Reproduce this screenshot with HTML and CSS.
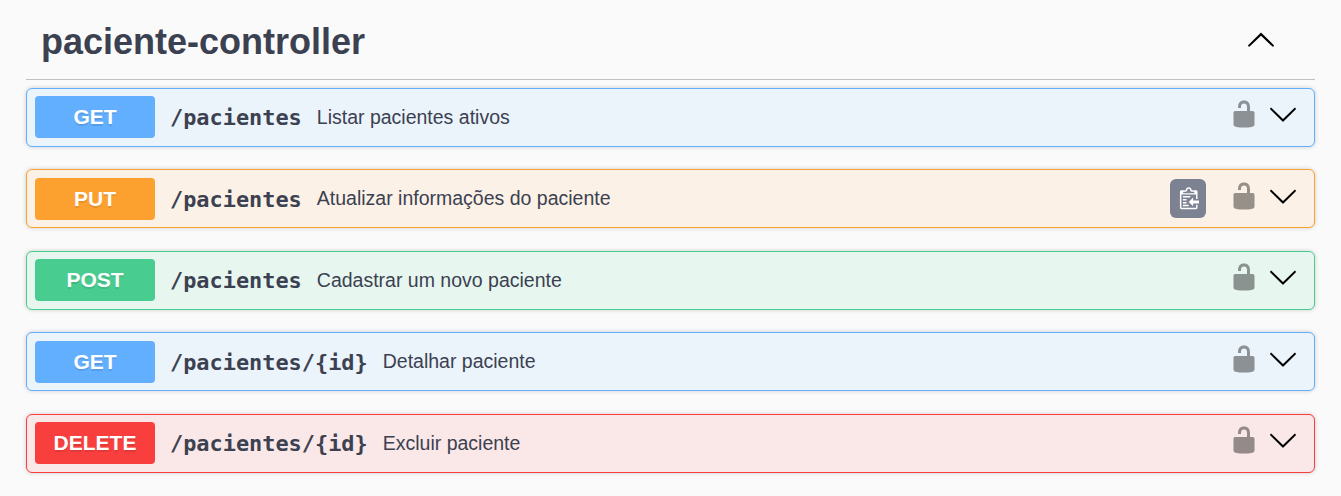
FILE: index.html
```
<!DOCTYPE html>
<html lang="pt-BR">
<head>
<meta charset="utf-8">
<title>paciente-controller</title>
<link rel="stylesheet" href="styles.css">
</head>
<body>
<svg class="sprite" aria-hidden="true">
  <symbol id="unlocked" viewBox="0 0 20 20"><path d="M15.8 8H14V5.6C14 2.703 12.665 1 10 1 7.334 1 6 2.703 6 5.6V6h2v-.801C8 3.754 8.797 3 10 3c1.203 0 2 .754 2 2.199V8H4c-.553 0-1 .646-1 1.199V17c0 .549.428 1.139.951 1.307l1.197.387C5.672 18.861 6.55 19 7.1 19h5.8c.549 0 1.428-.139 1.951-.307l1.196-.387c.524-.167.953-.757.953-1.306V9.199C17 8.646 16.352 8 15.8 8z"/></symbol>
  <symbol id="arrow-down" viewBox="0 0 20 20"><path d="M17.418 6.109c.272-.268.709-.268.979 0s.271.701 0 .969l-7.908 7.83c-.27.268-.707.268-.979 0l-7.908-7.83c-.27-.268-.27-.701 0-.969.271-.268.709-.268.979 0L10 13.25l7.418-7.141z"/></symbol>
  <symbol id="arrow-up" viewBox="0 0 20 20"><path d="M17.418 14.908c.272.27.709.27.979 0s.271-.701 0-.969l-7.908-7.83c-.27-.268-.707-.268-.979 0l-7.908 7.83c-.27.268-.27.701 0 .969.271.268.709.268.979 0L10 7.767l7.418 7.141z"/></symbol>
  <symbol id="clipboard" viewBox="0 0 15 16"><path fill-rule="evenodd" d="M4 12h4v1H4v-1zm5-6H4v1h5V6zm2 3V7l-3 3 3 3v-2h5V9h-5zM6.5 8H4v1h2.500V8zM4 11h2.500v-1H4v1zm9 1h1v2c-.02.28-.11.52-.3.700-.19.180-.42.280-.7.300H3c-.55 0-1-.45-1-1V3c0-.55.45-1 1-1h3c0-1.110.89-2 2-2 1.110 0 2 .89 2 2h3c.55 0 1 .45 1 1v5h-1V5H3v9h10v-2zM4 4h8c0-.55-.45-1-1-1h-1c-.55 0-1-.45-1-1s-.45-1-1-1-1 .45-1 1-.45 1-1 1H5c-.55 0-1 .45-1 1z"/></symbol>
</svg>
<main class="section">
  <header class="tag">
    <h3 class="tag-name">paciente-controller</h3>
    <svg class="icon"><use href="#arrow-up"/></svg>
  </header>
  <div class="operations">
    <div class="op get">
      <span class="method">GET</span><span class="path">/pacientes</span><span class="summary">Listar pacientes ativos</span>
      <svg class="icon lock"><use href="#unlocked"/></svg><svg class="icon"><use href="#arrow-down"/></svg>
    </div>
    <div class="op put">
      <span class="method">PUT</span><span class="path">/pacientes</span><span class="summary">Atualizar informações do paciente</span>
      <span class="copy"><svg class="copy-icon"><use href="#clipboard"/></svg></span>
      <svg class="icon lock"><use href="#unlocked"/></svg><svg class="icon"><use href="#arrow-down"/></svg>
    </div>
    <div class="op post">
      <span class="method">POST</span><span class="path">/pacientes</span><span class="summary">Cadastrar um novo paciente</span>
      <svg class="icon lock"><use href="#unlocked"/></svg><svg class="icon"><use href="#arrow-down"/></svg>
    </div>
    <div class="op get">
      <span class="method">GET</span><span class="path">/pacientes/{id}</span><span class="summary">Detalhar paciente</span>
      <svg class="icon lock"><use href="#unlocked"/></svg><svg class="icon"><use href="#arrow-down"/></svg>
    </div>
    <div class="op delete">
      <span class="method">DELETE</span><span class="path">/pacientes/{id}</span><span class="summary">Excluir paciente</span>
      <svg class="icon lock"><use href="#unlocked"/></svg><svg class="icon"><use href="#arrow-down"/></svg>
    </div>
  </div>
</main>
</body>
</html>
```
FILE: styles.css
```
* { box-sizing: border-box; }
body {
  margin: 0;
  height: 496px;
  overflow: hidden;
  background: #fafafa;
  color: #3b4151;
  font-family: "Liberation Sans", Arial, sans-serif;
}
.sprite { display: none; }
.section { padding: 0 26px; }
.tag {
  display: flex;
  align-items: center;
  justify-content: space-between;
  height: 80px;
  padding: 4px 39px 0 15px;
  border-bottom: 1px solid #bfc0c3;
}
.tag-name { margin: 0; font-size: 36px; line-height: 42px; }
.icon { display: block; flex: none; width: 30px; height: 30px; fill: #000; }
.tag .icon { margin-bottom: 5px; }
.operations {
  display: flex;
  flex-direction: column;
  gap: 22.5px;
  padding-top: 7.9px;
}
.op {
  display: flex;
  align-items: center;
  height: 59px;
  padding: 0 16px 0 8px;
  border: 1px solid var(--accent);
  border-radius: 6px;
  background: var(--tint);
  box-shadow: 0 0 4.5px rgba(0, 0, 0, .19);
}
.get { --accent: #61affe; --tint: #ebf3fb; }
.put { --accent: #fca130; --tint: #fbf1e6; }
.post { --accent: #49cc90; --tint: #e8f6f0; }
.delete { --accent: #f93e3e; --tint: #fae7e7; }
.method {
  flex: none;
  width: 120px;
  height: 42px;
  border-radius: 4px;
  background: var(--accent);
  color: #fff;
  font-size: 21px;
  font-weight: 700;
  line-height: 42px;
  text-align: center;
  text-shadow: 0 1.5px 0 rgba(0, 0, 0, .1);
}
.path {
  padding: 2px 15px 0;
  font: 700 21.9px/28px "DejaVu Sans Mono", monospace;
}
.summary { flex: 1; font-size: 19.5px; line-height: 24px; padding-bottom: 1px; }
.lock { margin: 0 9px 6px 0; opacity: .4; }
.lock + .icon { margin-bottom: 6px; }
.copy {
  display: flex;
  align-items: center;
  justify-content: center;
  width: 36px;
  height: 39px;
  margin-right: 23px;
  border-radius: 6px;
  background: #7d8293;
}
.copy-icon { width: 22px; height: 24px; fill: #fff; }
```
